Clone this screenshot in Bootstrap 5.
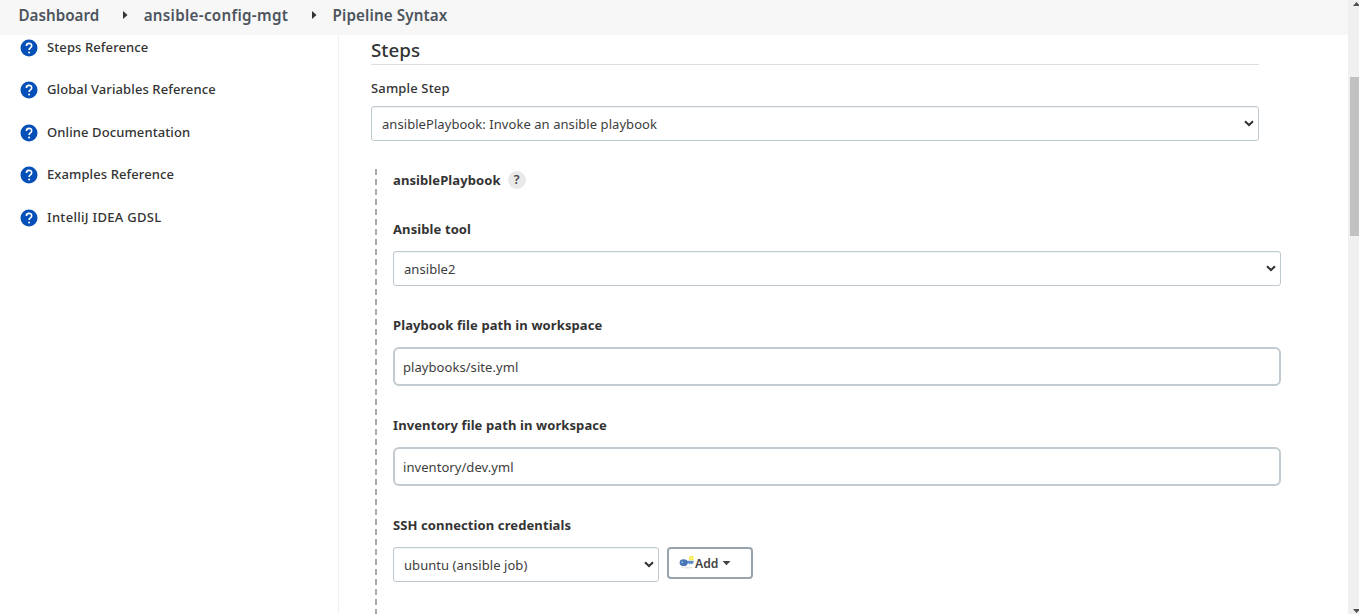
<!DOCTYPE html>
<html lang="en">
<head>
<meta charset="utf-8">
<meta name="viewport" content="width=device-width, initial-scale=1">
<title>Pipeline Syntax</title>
<link href="https://cdn.jsdelivr.net/npm/bootstrap@5.3.0/dist/css/bootstrap.min.css" rel="stylesheet">
<style>
body{font-family:"Segoe UI","Noto Sans","Open Sans",sans-serif;font-size:13.5px;line-height:20px;color:#333;height:614px;background:#fff}
.crumbs{height:35px;background:#f7f7f7;padding:0 0 5px 18.5px;font-size:15.2px;font-weight:600;color:#4d545d}
.crumbs a{color:inherit}
.crumbs .c2{letter-spacing:.3px}
.crumbs .c3{letter-spacing:.12px}
.crumbs svg{margin:0 15.7px 0 23.7px}
.side{width:339px;border-right:1px solid #f0f0f0;padding:2px 0 0 20px}
.side a{height:42.4px;color:#333;font-weight:500;font-size:13px;letter-spacing:.1px;gap:9px}
.side a:last-child{letter-spacing:.3px}
.side svg{margin-top:2px}
.main-col{padding-left:32px}
.section-title{width:888px;height:30px;border-bottom:1px solid #dcdfe1;font-size:18.8px;font-weight:500;line-height:30px;margin:0}
.step-label{font-weight:500;font-size:13px;letter-spacing:.15px;margin:13px 0 8px}
.form-select.pick{width:888px;height:35px;border:1px solid #bfcad0;border-radius:3px;box-shadow:inset 0 1px 1px rgba(0,0,0,.05);padding:2px 20px 0 10px;font-size:13px;letter-spacing:.06px;line-height:31px;color:#3d3d3d;background-image:url("data:image/svg+xml,%3Csvg xmlns='http://www.w3.org/2000/svg' viewBox='0 0 10 7'%3E%3Cpath d='M1 1.2 5 5 9 1.2' fill='none' stroke='%23333' stroke-width='2'/%3E%3C/svg%3E");background-size:10px 7px;background-position:right 4px center}
.form-select.pick.cred{width:266px}
.nested{margin:28px 0 0 4px;padding-left:18px;background:repeating-linear-gradient(#aaa 0 6px,transparent 6px 10px) left top/2px 100% no-repeat;height:445px}
.field-label{font-weight:700;font-size:13px;letter-spacing:.1px;height:20px;margin:29px 0 12px}
.field-label.step-name{margin:0;padding-top:2px;gap:7px}
.field-label.first{margin-top:30px}
.help-dot{width:18px;height:18px;border-radius:50%;background:#e9e9e9;font-size:12.5px;font-weight:600;line-height:18px;color:#444}
.form-control.entry{width:888px;height:39px;border:2px solid #c1cbd0;border-radius:6px;padding:0 8px;font-size:13px;letter-spacing:.06px;color:#3d3d3d}
.btn.add-cred{width:86px;height:32px;border:2px solid #98a4ad;border-radius:4px;padding:0 0 0 10px;font-size:12.2px;font-weight:600;color:#444}
.btn.add-cred span{padding-top:2px}
.scroller{width:11px;background:#f0f0f0}
.scroll-thumb{width:9px;height:159px;background:#c1c1c1;margin-top:71px}
.arrow-up{margin-top:2px}
</style>
</head>
<body class="d-flex overflow-hidden">
<svg class="d-none"><symbol id="help" viewBox="0 0 18 18"><circle cx="9" cy="9" r="8.5" fill="#0450b8"/><path d="M6.4 6.9C6.4 3.5 11.7 3.5 11.7 6.8c0 2.1-2.6 2.1-2.6 4.2" fill="none" stroke="#fff" stroke-width="1.6"/><circle cx="9.1" cy="13.4" r="1" fill="#fff"/></symbol></svg>
<div class="flex-grow-1 d-flex flex-column">
  <nav class="crumbs d-flex align-items-center flex-shrink-0">
    <a href="#" class="text-decoration-none">Dashboard</a>
    <svg width="5" height="8"><path d="M0 0 4.5 4 0 8z" fill="#333"/></svg>
    <a href="#" class="text-decoration-none c2">ansible-config-mgt</a>
    <svg width="5" height="8"><path d="M0 0 4.5 4 0 8z" fill="#333"/></svg>
    <a href="#" class="text-decoration-none c3">Pipeline Syntax</a>
  </nav>
  <div class="d-flex flex-grow-1">
    <aside class="side flex-shrink-0">
      <a href="#" class="d-flex align-items-start text-decoration-none"><svg width="18" height="18"><use href="#help"/></svg><span>Steps Reference</span></a>
      <a href="#" class="d-flex align-items-start text-decoration-none"><svg width="18" height="18"><use href="#help"/></svg><span>Global Variables Reference</span></a>
      <a href="#" class="d-flex align-items-start text-decoration-none"><svg width="18" height="18"><use href="#help"/></svg><span>Online Documentation</span></a>
      <a href="#" class="d-flex align-items-start text-decoration-none"><svg width="18" height="18"><use href="#help"/></svg><span>Examples Reference</span></a>
      <a href="#" class="d-flex align-items-start text-decoration-none"><svg width="18" height="18"><use href="#help"/></svg><span>IntelliJ IDEA GDSL</span></a>
    </aside>
    <main class="main-col">
      <h2 class="section-title">Steps</h2>
      <div class="step-label">Sample Step</div>
      <select class="form-select pick"><option>ansiblePlaybook: Invoke an ansible playbook</option></select>
      <div class="nested">
        <div class="field-label step-name d-flex align-items-center"><span>ansiblePlaybook</span><span class="help-dot text-center">?</span></div>
        <div class="field-label first">Ansible tool</div>
        <select class="form-select pick"><option>ansible2</option></select>
        <div class="field-label">Playbook file path in workspace</div>
        <input class="form-control entry" value="playbooks/site.yml">
        <div class="field-label">Inventory file path in workspace</div>
        <input class="form-control entry" value="inventory/dev.yml">
        <div class="field-label">SSH connection credentials</div>
        <div class="d-flex gap-2">
          <select class="form-select pick cred"><option>ubuntu (ansible job)</option></select>
          <button class="btn add-cred d-flex align-items-center" type="button">
            <svg width="16" height="16"><ellipse cx="8" cy="12.5" rx="6" ry="1" fill="#e8e8e8"/><path d="M6 5.8h8.5v2.8H13l-.6.8-.8-.8-.8.8-.8-.8H6z" fill="#5b8cc6"/><ellipse cx="4.6" cy="7.7" rx="4" ry="3.4" fill="#4676b5"/><circle cx="3.3" cy="7.2" r=".8" fill="#c5d6ea"/><circle cx="12.4" cy="3.2" r="1.7" fill="#fffbb0" stroke="#f5e63c" stroke-width="1.3"/></svg>
            <span>Add</span>
            <svg class="ms-1" width="9" height="5"><path d="M.5 0h8l-4 4.3z" fill="#444"/></svg>
          </button>
        </div>
      </div>
    </main>
  </div>
</div>
<div class="scroller d-flex flex-column align-items-end flex-shrink-0">
  <svg class="arrow-up" width="6" height="4"><path d="M0 4 3.5 0 7 4z" fill="#505050"/></svg>
  <div class="scroll-thumb"></div>
  <svg class="mt-auto" width="6" height="5"><path d="M0 0h7L3.5 4z" fill="#505050"/></svg>
</div>
<script src="https://cdn.jsdelivr.net/npm/bootstrap@5.3.0/dist/js/bootstrap.bundle.min.js"></script>
</body>
</html>
